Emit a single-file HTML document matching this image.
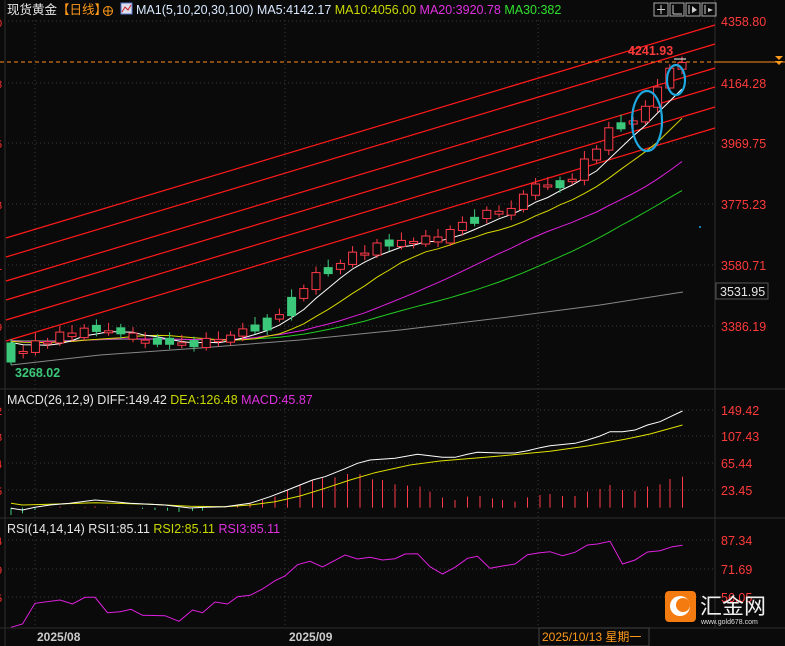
<!DOCTYPE html>
<html><head><meta charset="utf-8"><style>
html,body{margin:0;padding:0;background:#0a0a0a;width:785px;height:646px;overflow:hidden}
svg{display:block}
text{font-family:"Liberation Sans","Noto Sans CJK SC",sans-serif}
</style></head><body>
<svg id="s" width="785" height="646" viewBox="0 0 785 646" xmlns="http://www.w3.org/2000/svg">
<rect width="785" height="646" fill="#0a0a0a"/>
<g stroke="#3a3a3a" stroke-dasharray="1,3" stroke-width="1">
<line x1="8" y1="21" x2="715" y2="21"/><line x1="8" y1="83" x2="715" y2="83"/><line x1="8" y1="143" x2="715" y2="143"/><line x1="8" y1="204" x2="715" y2="204"/><line x1="8" y1="265" x2="715" y2="265"/><line x1="8" y1="326" x2="715" y2="326"/>
<line x1="8" y1="410" x2="715" y2="410"/><line x1="8" y1="436" x2="715" y2="436"/><line x1="8" y1="463" x2="715" y2="463"/><line x1="8" y1="490" x2="715" y2="490"/>
<line x1="8" y1="540" x2="715" y2="540"/><line x1="8" y1="569" x2="715" y2="569"/><line x1="8" y1="597" x2="715" y2="597"/>
<line x1="35" y1="20" x2="35" y2="628"/><line x1="285" y1="20" x2="285" y2="628"/><line x1="538" y1="20" x2="538" y2="628"/>
</g>
<g stroke="#2e2e2e"><line x1="5" y1="0" x2="5" y2="646"/><line x1="715" y1="0" x2="715" y2="628"/>
<line x1="0" y1="389" x2="785" y2="389"/><line x1="0" y1="518" x2="785" y2="518"/><line x1="0" y1="628" x2="785" y2="628"/></g>
<g id="fan" stroke="#ff1a1a" stroke-width="1.2"></g>
<line x1="0" y1="62" x2="715" y2="62" stroke="#ff8c1a" stroke-dasharray="4,3"/>
<line x1="715" y1="62" x2="785" y2="62" stroke="#ff8c1a"/>
<g id="ma"></g>
<g id="cd"></g>
<ellipse cx="647" cy="121" rx="15" ry="30" fill="none" stroke="#1ea8e0" stroke-width="2.2"/>
<ellipse cx="676" cy="80" rx="9" ry="15" fill="none" stroke="#1ea8e0" stroke-width="2.2"/>
<line x1="674" y1="59" x2="686" y2="59" stroke="#fff"/>
<g id="macd"></g>
<polyline id="rsi" fill="none" stroke="#e020e0" stroke-width="1"/>
<text x="7" y="14" font-size="12.5" fill="#e6e6e6">现货黄金<tspan fill="#ff9a1a">【日线】</tspan></text>
<circle cx="108" cy="11" r="4.5" fill="none" stroke="#ff9a1a"/><line x1="103" y1="11" x2="113" y2="11" stroke="#ff9a1a"/><line x1="108" y1="6" x2="108" y2="16" stroke="#ff9a1a"/>
<rect x="121" y="3" width="11" height="11" fill="#dde" stroke="#5577cc"/><polyline points="122,12 125,7 128,10 131,5" fill="none" stroke="#d02020"/>
<text x="136" y="14" font-size="12.5" fill="#d8e8ff">MA1(5,10,20,30,100)  MA5:4142.17  <tspan fill="#c8d800">MA10:4056.00</tspan>  <tspan fill="#e030e0">MA20:3920.78</tspan>  <tspan fill="#30e030">MA30:382</tspan></text>
<g fill="none" stroke="#aaa"><rect x="654" y="3" width="14" height="13"/><rect x="670" y="3" width="14" height="13"/><rect x="686" y="3" width="14" height="13"/><rect x="702" y="3" width="14" height="13"/></g>
<g stroke="#ccc"><line x1="657" y1="9.5" x2="665" y2="9.5"/><line x1="661" y1="5" x2="661" y2="14"/><line x1="673" y1="5" x2="673" y2="14"/><line x1="673" y1="14" x2="682" y2="14"/><line x1="689" y1="5" x2="689" y2="14"/><line x1="705" y1="5" x2="705" y2="14"/></g>
<polygon points="692,6 697,10 692,13" fill="#ccc"/><polygon points="708,8 713,10 708,12" fill="#ccc"/>
<g font-size="12.5" fill="#ff3a3a">
<text x="721" y="26">4358.80</text><text x="721" y="88">4164.28</text><text x="721" y="148">3969.75</text><text x="721" y="209">3775.23</text><text x="721" y="270">3580.71</text><text x="721" y="331">3386.19</text>
<text x="721" y="415">149.42</text><text x="721" y="441">107.43</text><text x="721" y="468">65.44</text><text x="721" y="495">23.45</text>
<text x="721" y="545">87.34</text><text x="721" y="574">71.69</text><text x="721" y="602">56.05</text>
</g>
<rect x="716" y="283" width="52" height="16" fill="#0a0a0a" stroke="#555"/>
<text x="720" y="296" font-size="12.5" fill="#e6e6e6">3531.95</text>
<text x="628" y="55" font-size="12.5" font-weight="bold" fill="#ff3a3a">4241.93</text>
<polygon points="775,56 783,56 779,60" fill="#ff9a1a"/><polygon points="775,61 783,61 779,65" fill="#ff9a1a"/>
<circle cx="700" cy="227" r="1" fill="#1ea8e0"/>
<text x="15" y="377" font-size="12.5" font-weight="bold" fill="#3cc87a">3268.02</text>
<g fill="#ff3030" font-size="11"><text x="-4" y="27">0</text><text x="-4" y="88">8</text><text x="-4" y="148">5</text><text x="-4" y="209">3</text><text x="-4" y="270">1</text><text x="-4" y="331">9</text><text x="-4" y="415">2</text><text x="-4" y="441">3</text><text x="-4" y="468">4</text><text x="-4" y="495">5</text><text x="-4" y="545">4</text><text x="-4" y="574">9</text><text x="-4" y="602">5</text></g>
<text x="7" y="404" font-size="12.5" fill="#e6e6e6">MACD(26,12,9) DIFF:149.42  <tspan fill="#c8d800">DEA:126.48</tspan>  <tspan fill="#e030e0">MACD:45.87</tspan></text>
<text x="7" y="533" font-size="12.5" fill="#e6e6e6">RSI(14,14,14) RSI1:85.11  <tspan fill="#c8d800">RSI2:85.11</tspan>  <tspan fill="#e030e0">RSI3:85.11</tspan></text>
<text x="37" y="641" font-size="12" font-weight="bold" fill="#cccccc">2025/08</text>
<text x="289" y="641" font-size="12" font-weight="bold" fill="#cccccc">2025/09</text>
<rect x="539" y="628" width="110" height="18" fill="#0a0a0a" stroke="#444"/>
<text x="542" y="641" font-size="12" fill="#ff9a1a">2025/10/13 星期一</text>
<rect x="665" y="591" width="31" height="31" rx="4" fill="#f47b10"/>
<circle cx="680" cy="606" r="10" fill="#fff"/><circle cx="683" cy="605" r="7" fill="#f47b10"/>
<text x="700" y="614" font-size="22" fill="#f0f0f0" font-family="Noto Sans CJK SC,sans-serif">汇金网</text>
<text x="701" y="624" font-size="7" fill="#ddd">www.gold678.com</text>
</svg>
<script>
(function(){
var NS="http://www.w3.org/2000/svg";
function el(p,t,a){var e=document.createElementNS(NS,t);for(var k in a)e.setAttribute(k,a[k]);document.getElementById(p).appendChild(e);return e;}
[238,257,281,300,320,341].forEach(function(y){el("fan","line",{x1:6,y1:y,x2:715,y2:y-213});});
function interp(pts,x){for(var i=0;i<pts.length-1;i++){if(x>=pts[i][0]&&x<=pts[i+1][0]){var t=(x-pts[i][0])/(pts[i+1][0]-pts[i][0]);return pts[i][1]+t*(pts[i+1][1]-pts[i][1]);}}return x<pts[0][0]?pts[0][1]:pts[pts.length-1][1];}
var key=[[11,352],[35,345],[60,335],[95,328],[120,335],[150,340],[180,345],[210,342],[240,332],[270,320],[300,290],[320,272],[350,255],[380,245],[410,240],[440,240],[470,215],[500,212],[540,185],[570,180],[590,155],[610,125],[625,125],[648,105],[660,80],[672,68],[683,62]];
var N=56,xs=[],cl=[];
var noise=[0,3,-4,2,-3,4,-2,3,-1,-3,2,4,-3,1,-2,3,-4,2,0,-2,3,-3,4,-1,2,-3,1,3,-2,4,-3,2,-1,3,-4,2,-2,1,3,-3,2,4,-2,-4,3,-1,2,-3,4,1,-2,3,-1,2,-2,0];
for(var i=0;i<N;i++){var x=11+12.2*i;xs.push(x);cl.push(interp(key,x)+noise[i]);}
var green=[0,7,9,12,13,15,20,21,23,26,31,38,45,50];
for(var i=0;i<N;i++){
 var x=xs[i],c=cl[i],o=i?cl[i-1]+1:c+14;
 if(i==0){o=343;c=362;}
 var g=green.indexOf(i)>=0;
 var tp=Math.min(o,c),bt=Math.max(o,c);if(bt-tp<2){bt=tp+2;}
 if(g){tp=Math.min(tp,bt-6);}
 var h=bt-tp;var col=g?"#3cc87a":"#ff3a4a";
 el("cd","line",{x1:x,y1:tp-4-(i%3)*2,x2:x,y2:bt+3+(i%2)*2,stroke:col});
 el("cd","rect",{x:x-4,y:tp,width:8,height:Math.max(h,2),fill:g?col:"#0a0a0a",stroke:col});
}
function ma(n,col){var pts=[];for(var i=0;i<N;i++){var s=0;for(var j=i-n+1;j<=i;j++){s+=j<0?340:cl[j];}pts.push(xs[i].toFixed(1)+","+(s/n).toFixed(1));}
el("ma","polyline",{points:pts.join(" "),fill:"none",stroke:col,"stroke-width":1});}
el("ma","polyline",{points:"11,365 100,355 200,348 300,340 400,330 500,318 600,305 683,292",fill:"none",stroke:"#888"});
ma(30,"#22cc22");ma(20,"#e020e0");ma(10,"#d8d800");ma(5,"#ffffff");
function cv(a){return a.map(function(p){return (p[0]/2).toFixed(1)+","+(390+p[1]/3).toFixed(1);}).join(" ");}
var bars=[[22,375],[45,370],[70,360],[100,352],[120,350],[145,352],[170,351],[190,349],[215,351],[240,352],[262,352],[285,357],[310,360],[335,362],[358,366],[385,363],[405,362],[430,352],[450,350],[475,343],[500,338],[525,330],[550,320],[575,300],[600,283],[625,270],[645,265],[670,262],[695,252],[720,252],[745,268],[765,270],[790,283],[815,287],[840,290],[860,305],[885,323],[910,330],[935,320],[960,318],[985,325],[1005,330],[1030,335],[1055,322],[1080,315],[1100,312],[1125,318],[1150,318],[1175,305],[1200,297],[1220,285],[1245,300],[1270,303],[1295,290],[1320,283],[1340,267],[1365,260]];
bars.forEach(function(b){var x=b[0]/2,y=390+b[1]/3,z=390+353/3;el("macd","line",{x1:x,y1:z,x2:x,y2:y,stroke:y>z?"#3cc87a":"#ff3a4a"});});
el("macd","polyline",{points:cv([[22,340],[45,345],[100,343],[190,338],[300,343],[380,349],[450,350],[500,345],[550,335],[600,318],[650,295],[700,270],[750,248],[820,225],[880,213],[1000,198],[1100,184],[1175,168],[1250,148],[1300,132],[1365,105]]),fill:"none",stroke:"#e0e000"});
el("macd","polyline",{points:cv([[22,355],[45,360],[70,352],[100,345],[140,340],[190,330],[215,333],[260,340],[330,345],[380,354],[410,352],[450,350],[500,340],[540,320],[575,300],[600,285],[625,270],[650,260],[690,236],[715,220],[740,210],[790,205],[835,193],[860,197],[885,202],[910,202],[935,193],[955,187],[1000,189],[1030,189],[1055,182],[1080,173],[1100,167],[1150,160],[1175,150],[1200,138],[1220,125],[1245,125],[1270,120],[1295,105],[1320,95],[1345,77],[1365,63]]),fill:"none",stroke:"#ffffff"});
document.getElementById("rsi").setAttribute("points",cv([[22,712],[45,702],[70,640],[120,630],[145,642],[170,622],[190,622],[215,668],[240,665],[262,658],[285,676],[330,677],[358,694],[385,660],[405,668],[430,636],[455,642],[475,620],[500,616],[525,597],[550,572],[570,558],[595,524],[620,514],[645,531],[690,495],[715,507],[740,502],[765,510],[790,506],[810,492],[835,491],[860,530],[885,552],[910,532],[935,505],[955,499],[980,535],[1005,528],[1030,522],[1055,494],[1080,488],[1100,485],[1125,497],[1150,487],[1175,465],[1195,462],[1220,454],[1245,522],[1270,510],[1295,486],[1320,482],[1345,470],[1365,466]]));
})();
</script>
</body></html>
